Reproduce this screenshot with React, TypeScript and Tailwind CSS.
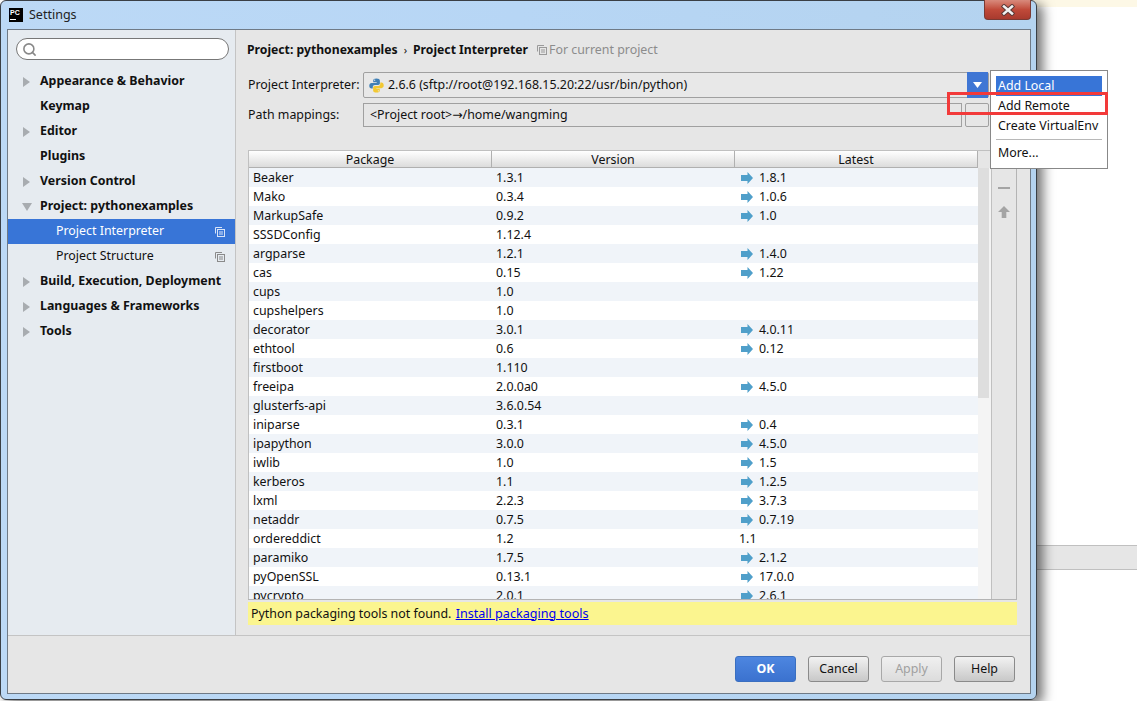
import { Search } from "lucide-react";

type Pkg = { name: string; version: string; latest?: string; noArrow?: boolean };

const packages: Pkg[] = [
  { name: "Beaker", version: "1.3.1", latest: "1.8.1" },
  { name: "Mako", version: "0.3.4", latest: "1.0.6" },
  { name: "MarkupSafe", version: "0.9.2", latest: "1.0" },
  { name: "SSSDConfig", version: "1.12.4" },
  { name: "argparse", version: "1.2.1", latest: "1.4.0" },
  { name: "cas", version: "0.15", latest: "1.22" },
  { name: "cups", version: "1.0" },
  { name: "cupshelpers", version: "1.0" },
  { name: "decorator", version: "3.0.1", latest: "4.0.11" },
  { name: "ethtool", version: "0.6", latest: "0.12" },
  { name: "firstboot", version: "1.110" },
  { name: "freeipa", version: "2.0.0a0", latest: "4.5.0" },
  { name: "glusterfs-api", version: "3.6.0.54" },
  { name: "iniparse", version: "0.3.1", latest: "0.4" },
  { name: "ipapython", version: "3.0.0", latest: "4.5.0" },
  { name: "iwlib", version: "1.0", latest: "1.5" },
  { name: "kerberos", version: "1.1", latest: "1.2.5" },
  { name: "lxml", version: "2.2.3", latest: "3.7.3" },
  { name: "netaddr", version: "0.7.5", latest: "0.7.19" },
  { name: "ordereddict", version: "1.2", latest: "1.1", noArrow: true },
  { name: "paramiko", version: "1.7.5", latest: "2.1.2" },
  { name: "pyOpenSSL", version: "0.13.1", latest: "17.0.0" },
  { name: "pycrypto", version: "2.0.1", latest: "2.6.1" },
];

const navItems = [
  { label: "Appearance & Behavior", arrow: "right" },
  { label: "Keymap" },
  { label: "Editor", arrow: "right" },
  { label: "Plugins" },
  { label: "Version Control", arrow: "right" },
  { label: "Project: pythonexamples", arrow: "down" },
  { label: "Project Interpreter", sub: true, active: true },
  { label: "Project Structure", sub: true },
  { label: "Build, Execution, Deployment", arrow: "right" },
  { label: "Languages & Frameworks", arrow: "right" },
  { label: "Tools", arrow: "right" },
];

const CopyIcon = ({ color }: { color: string }) => (
  <svg width="10" height="10" viewBox="0 0 10 10" fill="none" stroke={color}>
    <path d="M0.5 6.5V0.5H7" />
    <rect x="2.5" y="2.5" width="7" height="7" />
    <path d="M4 5H8M4 7H8" />
  </svg>
);

const NavArrow = ({ dir }: { dir: string }) => (
  <svg width="10" height="10" viewBox="0 0 10 10" fill="#a8acb0">
    {dir === "right" ? <path d="M1 0L8 5L1 10Z" /> : <path d="M0 1H10L5 9Z" />}
  </svg>
);

const UpdateArrow = () => (
  <svg width="12" height="12" viewBox="0 0 12 12" fill="#4f9fca">
    <path d="M0 3H6.5V0L12 6L6.5 12V9H0Z" />
  </svg>
);

const PythonIcon = () => (
  <svg width="15" height="15" viewBox="0 0 16 16">
    <path
      fill="#3f7fb5"
      d="M8 0.5C5.5 0.5 4.5 1.3 4.5 2.8V4.5H8.2V5.2H2.8C1.2 5.2 0.3 6.4 0.3 8.2C0.3 10 1.2 11.2 2.8 11.2H4V9.5C4 8.3 5 7.4 6.2 7.4H9.8C10.8 7.4 11.6 6.6 11.6 5.6V2.8C11.6 1.3 10.3 0.5 8 0.5ZM6 1.6A0.7 0.7 0 1 1 6 3A0.7 0.7 0 1 1 6 1.6Z"
    />
    <path
      fill="#f2c832"
      d="M8 15.5C10.5 15.5 11.5 14.7 11.5 13.2V11.5H7.8V10.8H13.2C14.8 10.8 15.7 9.6 15.7 7.8C15.7 6 14.8 4.8 13.2 4.8H12V6.5C12 7.7 11 8.6 9.8 8.6H6.2C5.2 8.6 4.4 9.4 4.4 10.4V13.2C4.4 14.7 5.7 15.5 8 15.5ZM10 14.4A0.7 0.7 0 1 1 10 13A0.7 0.7 0 1 1 10 14.4Z"
    />
  </svg>
);

const CloseGlyph = () => (
  <svg width="14" height="12" viewBox="0 0 14 12" fill="none" strokeLinecap="square">
    <path d="M3 2.5L11 9.5M11 2.5L3 9.5" stroke="#5a3a38" strokeWidth="4.5" />
    <path d="M3 2.5L11 9.5M11 2.5L3 9.5" stroke="#f2f2f2" strokeWidth="2.5" />
  </svg>
);

const FooterButton = ({ label, kind }: { label: string; kind?: string }) => (
  <button
    className={
      kind === "primary"
        ? "w-[61px] h-[26px] rounded-[3px] border border-[#3a6fc0] bg-gradient-to-b from-[#4d86e0] to-[#3b72cf] text-white font-bold"
        : kind === "disabled"
          ? "w-[61px] h-[26px] rounded-[3px] border border-[#a8a8a8] bg-gradient-to-b from-[#f0f0f0] to-[#dcdcdc] text-[#a0a0a0]"
          : "w-[61px] h-[26px] rounded-[3px] border border-[#8a8a8a] bg-gradient-to-b from-[#f2f2f2] to-[#c8c8c8] text-[#111]"
    }
  >
    {label}
  </button>
);

const App = () => {
  return (
    <div className="relative w-[1137px] h-[701px] overflow-hidden bg-white text-[12.4px] text-[#111] font-['Noto_Sans',sans-serif]">
      {/* stuff behind the dialog */}
      <div className="absolute left-[1000px] top-0 w-[137px] h-[7px] bg-[#fdf8e6]" />
      <div className="absolute left-[1000px] top-[545px] w-[137px] h-[25px] bg-[#e6e6e6] border-y border-[#c0c0c0]" />

      {/* settings window */}
      <div className="absolute left-0 top-0 w-[1037px] h-[700px] flex flex-col rounded-[6px] border border-[#3a3f45] bg-gradient-to-r from-[#bcd9f6] via-[#b7d6f5] to-[#b4d3ef] pl-[6px] pr-[5px] pb-[5px] shadow-[6px_4px_12px_rgba(0,0,0,0.55)]">
        <div className="h-[28px] shrink-0 flex items-center gap-[6px] relative">
          <div className="w-[14px] h-[14px] ml-[2px] bg-black text-white flex flex-col pl-[1px]">
            <span className="text-[7px] leading-[9px] font-bold font-['Liberation_Sans',sans-serif]">PC</span>
            <span className="w-[6px] h-px mt-[2px] bg-white" />
          </div>
          <span className="text-[12.5px] text-[#222]">Settings</span>
          <div className="absolute right-0 top-[-1px] w-[47px] h-[20px] rounded-b-[4px] border border-[#7a3a34] border-t-0 bg-gradient-to-b from-[#d88a7c] via-[#c04a3a] to-[#a83a2e] flex items-center justify-center">
            <CloseGlyph />
          </div>
        </div>

        <div className="flex-1 flex flex-col border border-[#6f7a86] bg-[#e6e6e6] min-h-0">
          <div className="flex-1 flex min-h-0 border-b border-[#c4c4c4]">
            {/* sidebar */}
            <div className="w-[228px] shrink-0 bg-[#e6ebf0] border-r border-[#c4c4c4] pt-[8px]">
              <div className="ml-[8px] mr-[6px] h-[22px] rounded-full border border-[#777] bg-white flex items-center pl-[5px]">
                <Search size={15} strokeWidth={2.5} className="text-[#888]" />
              </div>
              <div className="mt-[9px]">
                {navItems.map((item) => (
                  <div
                    key={item.label}
                    className={
                      item.active
                        ? "h-[25px] flex items-center pl-[48px] pr-[10px] bg-[#3875d7] text-white"
                        : item.sub
                          ? "h-[25px] flex items-center pl-[48px] pr-[10px]"
                          : "h-[25px] flex items-center pl-[14px] font-bold"
                    }
                  >
                    {!item.sub && (
                      <span className="w-[18px] flex">
                        {item.arrow && <NavArrow dir={item.arrow} />}
                      </span>
                    )}
                    <span className="flex-1 whitespace-nowrap">{item.label}</span>
                    {item.sub && <CopyIcon color={item.active ? "#d8e4f8" : "#8a8a8a"} />}
                  </div>
                ))}
              </div>
            </div>

            {/* interpreter page */}
            <div className="flex-1 min-w-0 pt-[10px] pl-[12px] pr-[13px] flex flex-col">
              <div className="h-[20px] -ml-[1px] flex items-center font-bold text-[12.2px]">
                <span>Project: pythonexamples</span>
                <span className="mx-[6px] font-normal text-[11px]">›</span>
                <span>Project Interpreter</span>
                <span className="ml-[9px] mr-[2px] flex">
                  <CopyIcon color="#9a9a9a" />
                </span>
                <span className="font-normal text-[12.4px] text-[#8c8c8c]">For current project</span>
              </div>

              <div className="mt-[12px] flex items-center">
                <span className="w-[115px] shrink-0 whitespace-nowrap pt-[1px]">Project Interpreter:</span>
                <div className="w-[626px] h-[26px] shrink-0 flex items-center rounded-[2px] border border-[#a0a0a0] bg-[#e8e8e8] pl-[5px]">
                  <PythonIcon />
                  <span className="ml-[4px] flex-1 pt-[1px]">2.6.6 (sftp://root@192.168.15.20:22/usr/bin/python)</span>
                  <div className="w-[21px] h-[26px] bg-[#3f76d4] flex items-center justify-center">
                    <svg width="9" height="6" viewBox="0 0 9 6" fill="white">
                      <path d="M0 0H9L4.5 6Z" />
                    </svg>
                  </div>
                </div>
              </div>

              <div className="mt-[5px] flex items-center">
                <span className="w-[115px] shrink-0 pt-[1px]">Path mappings:</span>
                <div className="w-[599px] h-[24px] shrink-0 flex items-center border border-[#a0a0a0] pl-[6px] pt-[1px]">
                  &lt;Project root&gt;
                  <span className="font-['DejaVu_Sans',sans-serif]">→</span>
                  /home/wangming
                </div>
                <div className="w-[24px] h-[24px] ml-[3px] shrink-0 rounded-[2px] border border-[#a0a0a0]" />
              </div>

              {/* package table */}
              <div className="mt-[23px] h-[450px] shrink-0 flex flex-col overflow-hidden border-b border-r border-[#b4b4b4]">
                <div className="h-[18px] shrink-0 flex pr-[38px] border-t border-l border-[#c0c0c0]">
                  {["Package", "Version", "Latest"].map((h) => (
                    <div
                      key={h}
                      className="flex-1 h-full flex items-center justify-center pt-[3px] border-r border-b border-[#b0b0b0] bg-gradient-to-b from-white to-[#dcdcdc]"
                    >
                      {h}
                    </div>
                  ))}
                </div>
                <div className="flex flex-1 min-h-0">
                  <div className="flex-1 min-w-0 border-l border-[#c0c0c0] overflow-hidden bg-white">
                    {packages.map((p, i) => (
                      <div
                        key={p.name}
                        className={
                          i % 2 === 0
                            ? "h-[19px] flex items-center pt-[1px] bg-[#f0f4f9]"
                            : "h-[19px] flex items-center pt-[1px] bg-white"
                        }
                      >
                        <span className="w-[243px] pl-[4px]">{p.name}</span>
                        <span className="w-[243px] pl-[4px]">{p.version}</span>
                        {p.latest && (
                          <span className={p.noArrow ? "flex items-center pl-[4px]" : "flex items-center pl-[6px]"}>
                            {!p.noArrow && (
                              <span className="mr-[6px] flex">
                                <UpdateArrow />
                              </span>
                            )}
                            {p.latest}
                          </span>
                        )}
                      </div>
                    ))}
                  </div>
                  <div className="w-[14px] shrink-0 bg-[#f4f4f4] border-r border-[#c0c0c0] pr-[2px]">
                    <div className="h-[230px] bg-[#dedede]" />
                  </div>
                  <div className="w-[24px] shrink-0 flex flex-col items-center pt-[19px]">
                    <div className="w-[12px] h-[2px] bg-[#a4a4a4]" />
                    <svg className="mt-[17px]" width="12" height="12" viewBox="0 0 13 13" fill="#a4a4a4">
                      <path d="M6.5 0L13 6.5H9V13H4V6.5H0Z" />
                    </svg>
                  </div>
                </div>
              </div>

              <div className="mt-[2px] h-[23px] flex items-center pt-[1px] bg-[#fbf58f] pl-[3px]">
                Python packaging tools not found.&nbsp;
                <span className="ml-[1px] text-[12.6px] text-[#0000ee] underline">Install packaging tools</span>
              </div>
            </div>
          </div>

          {/* footer */}
          <div className="h-[57px] shrink-0 flex items-start justify-end gap-[12px] pt-[20px] pr-[15px]">
            <FooterButton label="OK" kind="primary" />
            <FooterButton label="Cancel" />
            <FooterButton label="Apply" kind="disabled" />
            <FooterButton label="Help" />
          </div>
        </div>
      </div>

      {/* dropdown popup */}
      <div className="absolute left-[990px] top-[70px] w-[118px] h-[99px] bg-white border border-[#888] p-[5px]">
        <div className="h-[20px] flex items-center pl-[2px] bg-[#3875d7] text-white">Add Local</div>
        <div className="h-[20px] flex items-center pl-[2px]">Add Remote</div>
        <div className="h-[20px] flex items-center pl-[2px] whitespace-nowrap">Create VirtualEnv</div>
        <div className="h-px mt-[3px] bg-[#b8b8b8]" />
        <div className="h-[24px] flex items-center pl-[2px] mt-[1px]">More...</div>
      </div>

      {/* red annotation */}
      <div className="absolute left-[947px] top-[92px] w-[161px] h-[23px] border-[3px] border-[#f23a3a]" />
    </div>
  );
};

export default App;
